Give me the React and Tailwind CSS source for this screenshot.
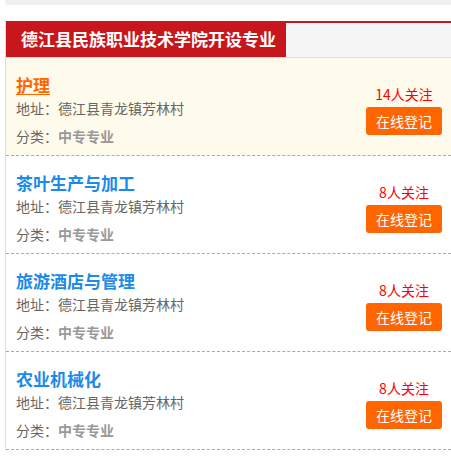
const majors = [
  { name: '护理', follows: 14, active: true },
  { name: '茶叶生产与加工', follows: 8 },
  { name: '旅游酒店与管理', follows: 8 },
  { name: '农业机械化', follows: 8 },
];

function MajorItem({ item }) {
  return (
    <div
      className={`flex h-[98px] border-b border-dashed border-[#aaa] ${
        item.active ? 'bg-[#fffbec]' : 'bg-white'
      }`}
    >
      <div className="flex-1 pl-[10px] pt-[16px]">
        <a
          href="#"
          className={`block w-fit text-[17px] font-bold leading-[22px] ${
            item.active ? 'text-[#ff6600] underline underline-offset-2' : 'text-[#1c8ae8]'
          }`}
        >
          {item.name}
        </a>
        <div className="text-[14px] leading-[24px] text-[#666]">地址：德江县青龙镇芳林村</div>
        <div className="mt-[4px] text-[14px] leading-[24px] text-[#666]">
          分类：<span className="font-bold text-[#999]">中专专业</span>
        </div>
      </div>
      <div className="w-[76px] pt-[26px] mr-[9px] flex flex-col items-center">
        <div className="text-[14px] leading-[20px] text-[#ff0000]">{item.follows}人关注</div>
        <button className="mt-[3px] h-[28px] w-[76px] rounded-[3px] bg-[#ff6600] text-[14px] text-white">
          在线登记
        </button>
      </div>
    </div>
  );
}

export default function App() {
  return (
    <div
      className="h-[461px] w-[451px] overflow-hidden bg-white"
      style={{ fontFamily: '"Noto Sans CJK SC", "Noto Sans", sans-serif' }}
    >
      <div className="ml-[5px] h-[5px] rounded-bl-[3px] bg-[#f0f0f0]" />
      <div className="ml-[5px] mt-[16px] border-l border-[#ddd]">
        <div className="flex h-[37px] border-t-2 border-b border-[#c8161d] border-b-[#ddd] bg-[#f5f5f5]">
          <h2 className="-mt-[2px] flex h-[36px] w-[280px] items-center whitespace-nowrap bg-[#c8161d] pl-[15px] text-[17px] font-bold text-white">
            德江县民族职业技术学院开设专业
          </h2>
        </div>
        {majors.map((m) => (
          <MajorItem key={m.name} item={m} />
        ))}
      </div>
    </div>
  );
}
